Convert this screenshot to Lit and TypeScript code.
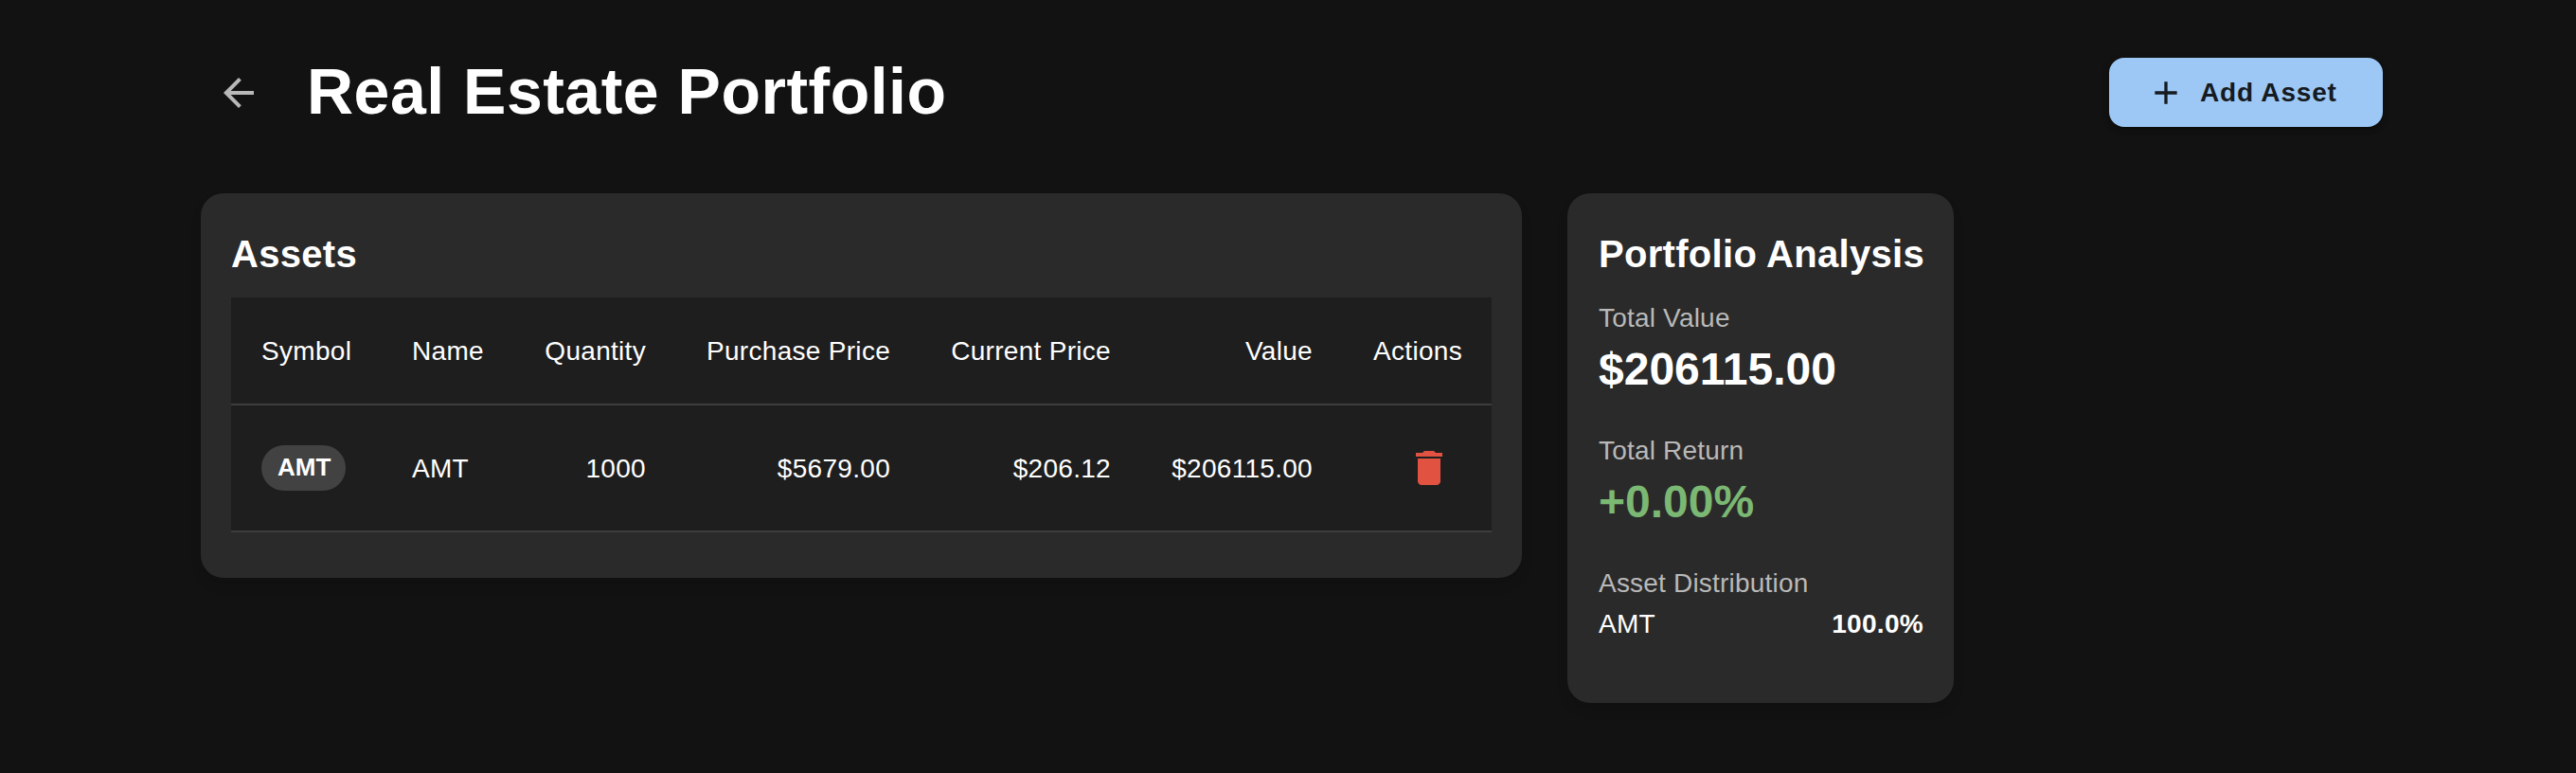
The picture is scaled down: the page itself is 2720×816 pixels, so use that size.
import { LitElement, html, css, svg } from "lit";
import { customElement } from "lit/decorators.js";

interface Asset {
  symbol: string;
  name: string;
  quantity: number;
  purchase: string;
  current: string;
  value: string;
  share: string;
}

const ASSETS: Asset[] = [
  { symbol: "AMT", name: "AMT", quantity: 1000, purchase: "$5679.00", current: "$206.12", value: "$206115.00", share: "100.0%" },
];

const icon = (d: string) => html`<svg class="icon" viewBox="0 0 24 24" aria-hidden="true">${svg`<path d=${d}></path>`}</svg>`;

const ARROW_BACK = "M20 11H7.83l5.59-5.59L12 4l-8 8 8 8 1.41-1.41L7.83 13H20v-2z";
const ADD = "M19 13h-6v6h-2v-6H5v-2h6V5h2v6h6v2z";
const DELETE = "M6 19c0 1.1.9 2 2 2h8c1.1 0 2-.9 2-2V7H6v12zM19 4h-3.5l-1-1h-5l-1 1H5v2h14V4z";

@customElement("app-root")
export class AppRoot extends LitElement {
  static styles = css`
    :host {
      display: block;
      box-sizing: border-box;
      min-height: 816px;
      padding: 56px 204px 0 212px;
      background: #121212;
      color: #fff;
      font-family: "Liberation Sans", Helvetica, Arial, sans-serif;
      font-size: 28px;
    }
    * { box-sizing: border-box; }
    h1, h2, p { margin: 0; }
    button { border: 0; background: none; font: inherit; display: flex; align-items: center; }
    .icon { display: block; width: 48px; height: 48px; fill: currentColor; }
    .header { display: flex; align-items: center; height: 83px; margin-bottom: 65px; }
    .back { padding: 17px 15px 16px 16px; margin-right: 33px; color: #b8b8b8; }
    .title { flex: 1; font-size: 68px; line-height: 84px; padding-bottom: 4px; font-weight: 700; letter-spacing: 0.5px; }
    .add {
      width: 289px;
      height: 73px;
      padding: 0 48px 0 40px;
      border-radius: 16px;
      background: #9dc8f5;
      color: #151b21;
      font-weight: 700;
      letter-spacing: 0.8px;
      line-height: 49px;
      white-space: nowrap;
      box-shadow: 0 6px 2px -4px rgba(0,0,0,.2), 0 4px 4px rgba(0,0,0,.14), 0 2px 10px rgba(0,0,0,.12);
    }
    .add .icon { width: 40px; height: 40px; margin-right: 16px; }
    .content { display: flex; align-items: flex-start; gap: 48px; }
    .card {
      padding: 32px 32px 48px;
      border-radius: 24px;
      background: #2a2a2a;
      box-shadow: 0 8px 12px rgba(0,0,0,.1);
    }
    .assets { width: 1395px; }
    .analysis { width: 408px; }
    .heading { font-size: 40px; line-height: 64px; margin-bottom: 14px; font-weight: 700; letter-spacing: 0.3px; white-space: nowrap; }
    .table { background: #1e1e1e; }
    .row {
      display: grid;
      grid-template-columns: 159px 140px 171px 258px 233px 213px 157px;
      align-items: center;
      border-bottom: 2px solid #3d3d3d;
      height: 134px;
      letter-spacing: 0.3px;
      line-height: 40px;
    }
    .head { height: 114px; line-height: 48px; }
    .cell { padding: 2px 32px 0; white-space: nowrap; }
    .cell:last-child { padding-right: 31px; }
    .symbol { padding-top: 0; }
    .num { text-align: right; }
    .action { display: flex; justify-content: flex-end; padding: 0 32px 0 0; }
    .action:last-child { padding-right: 32px; }
    .delete { padding: 10px; color: #e15241; }
    .chip {
      display: flex;
      align-items: center;
      width: 89px;
      height: 48px;
      padding: 0 16px 2px 17px;
      border-radius: 24px;
      background: #424242;
      font-size: 26px;
      line-height: 39px;
      font-weight: 700;
      letter-spacing: 0;
    }
    .analysis { padding-left: 33px; }
    .stat { margin-bottom: 32px; }
    .label { line-height: 44px; color: #b9b9b9; letter-spacing: 0.2px; }
    .figure { font-size: 48px; line-height: 64px; font-weight: 700; }
    .gain { color: #7ab873; }
    .share { display: flex; justify-content: space-between; line-height: 42px; height: 40px; margin-bottom: 16px; letter-spacing: 0.3px; }
    .percent { font-weight: 700; }
  `;

  render() {
    return html`
      <header class="header">
        <button class="back" aria-label="Back">${icon(ARROW_BACK)}</button>
        <h1 class="title">Real Estate Portfolio</h1>
        <button class="add">${icon(ADD)}<span>Add Asset</span></button>
      </header>
      <main class="content">
        <section class="card assets">
          <h2 class="heading">Assets</h2>
          <div class="table">
            <div class="row head">
              <div class="cell">Symbol</div>
              <div class="cell">Name</div>
              <div class="cell num">Quantity</div>
              <div class="cell num">Purchase Price</div>
              <div class="cell num">Current Price</div>
              <div class="cell num">Value</div>
              <div class="cell num">Actions</div>
            </div>
            ${ASSETS.map((a) => html`
              <div class="row">
                <div class="cell symbol"><span class="chip">${a.symbol}</span></div>
                <div class="cell">${a.name}</div>
                <div class="cell num">${a.quantity}</div>
                <div class="cell num">${a.purchase}</div>
                <div class="cell num">${a.current}</div>
                <div class="cell num">${a.value}</div>
                <div class="cell action"><button class="delete" aria-label="Delete">${icon(DELETE)}</button></div>
              </div>`)}
          </div>
        </section>
        <section class="card analysis">
          <h2 class="heading">Portfolio Analysis</h2>
          <div class="stat"><p class="label">Total Value</p><p class="figure">$206115.00</p></div>
          <div class="stat"><p class="label">Total Return</p><p class="figure gain">+0.00%</p></div>
          <p class="label">Asset Distribution</p>
          ${ASSETS.map((a) => html`<div class="share"><span>${a.symbol}</span><span class="percent">${a.share}</span></div>`)}
        </section>
      </main>
    `;
  }
}
